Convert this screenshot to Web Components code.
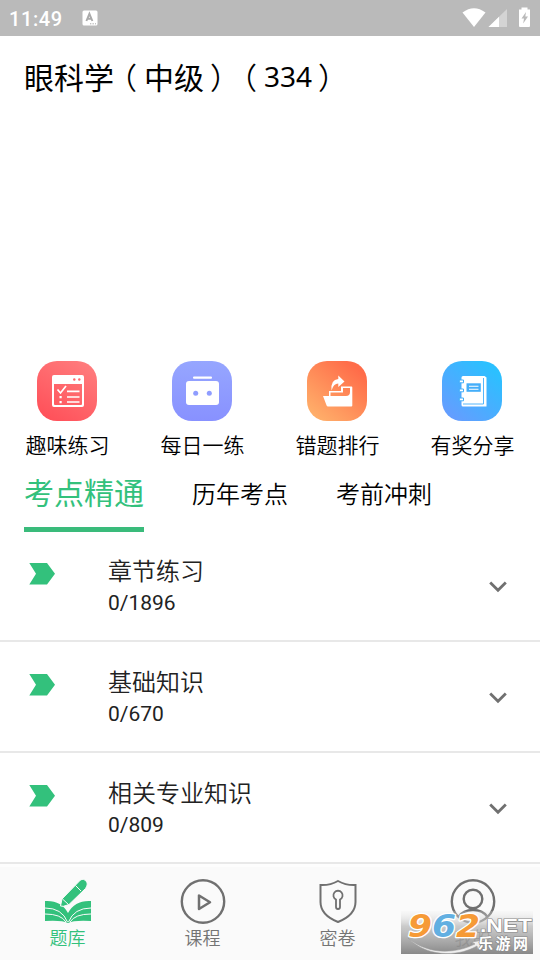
<!DOCTYPE html>
<html lang="zh-CN">
<head>
<meta charset="utf-8">
<title>题库</title>
<style>
html,body{margin:0;padding:0}
body{width:540px;height:960px;overflow:hidden;background:#fff;font-family:"Noto Sans CJK SC",sans-serif;font-weight:350;color:#000}
</style>
</head>
<body>
<quiz-app></quiz-app>
<script>
const define = (name, html) => {
  const t = document.createElement('template');
  t.innerHTML = html;
  customElements.define(name, class extends HTMLElement {
    constructor() {
      super();
      this.attachShadow({mode: 'open'}).appendChild(t.content.cloneNode(true));
    }
  });
};

define('status-bar', `<style>
:host{display:flex;box-sizing:border-box;height:36px;background:#bababa;color:#fff;align-items:center;padding:0 8px 0 9px;font:500 20px/36px Roboto,sans-serif}
.time{width:73px;letter-spacing:.6px;padding-top:1px}.fill{flex:1}svg{display:block}
</style><span class="time">11:49</span>
<svg width="16" height="16" viewBox="0 0 16 16"><rect x=".5" y=".5" width="15" height="15" rx="1.500" fill="#fff"/><path d="M4.400 11 7.400 3.800 10.400 11M5.400 8.700h4" fill="none" stroke="#aaa" stroke-width="1.900"/><path d="M8 13.800h1.300m1.200 0h1.300m1.200 0h1" stroke="#aaa"/></svg>
<span class="fill"></span>
<svg width="77" height="24" viewBox="455 6 77 24"><path d="M462.500 12.500Q474 4 485.500 12.500L474 27Z" fill="#fff"/><path d="M488.500 27 507 9v18Z" fill="#d4d4d4"/><path d="M488.500 27 499 16.800V27Z" fill="#fff"/><path d="M519 9.500h2.500V7.500h6v2H530V26q0 1-1 1h-9q-1 0-1-1Z" fill="#fff"/><path d="m526 12-4.500 6.500h2.500l-.8 5 4.800-7h-2.700Z" fill="#bababa"/></svg>`);

define('page-title', `<style>
:host{display:flex;height:325px;box-sizing:border-box;padding:18px 24px 0;font-size:30px;line-height:44px;white-space:pre;font-weight:400}
.p{width:30px;text-spacing-trim:space-all;font-weight:350}
.open{margin:0 7px 0 -7px}.close{margin:0 -6px 0 6px}
.n{font-family:"Noto Sans",sans-serif;font-size:28px;width:48px}
</style><span>眼科学</span><span class="p open">（</span><span>中级</span><span class="p close">）</span><span class="p open">（</span><span class="n">334</span><span class="p close">）</span>`);

define('quick-entry', `<style>
:host{display:flex;flex:1;flex-direction:column;align-items:center;font-size:21px;line-height:30px;white-space:nowrap}
::slotted(svg){display:block;width:60px;height:60px;margin-right:1px}
.label{margin-top:8px}
</style><slot name="icon"></slot><span class="label"><slot></slot></span>`);

define('tab-item', `<style>
:host{display:block;box-sizing:border-box;width:96px;height:71px;font-size:24px;line-height:46px;padding-top:9px;white-space:nowrap}
:host([active]){width:120px;font-size:30px;color:#33c17c;border-bottom:5px solid #3abb7b;line-height:44px;padding-top:8px;font-weight:400}
</style><slot></slot>`);

define('chapter-row', `<style>
:host{display:flex;box-sizing:border-box;height:111px;border-bottom:2px solid #e8e8e8;padding:0 29px;color:#222}
.mark{width:79px;padding-top:31px}.text{flex:1}
.name{font-size:24px;line-height:36px;padding-top:21px}
.count{font-size:21px;line-height:30px;font-weight:400;font-family:Roboto,sans-serif}
.arrow{padding:49px 3px 0 0}svg{display:block}
</style><span class="mark"><svg width="27" height="23" viewBox="0 0 27 23"><path d="M.3 1H18l8 10.700L18 22.500H.3L7 11.700Z" fill="#33c17c"/></svg></span>
<div class="text"><div class="name"><slot></slot></div><div class="count"><slot name="count"></slot></div></div>
<span class="arrow"><svg width="20" height="14" viewBox="0 0 20 14"><path d="m2.200 2.500 7.800 7.800 7.800-7.800" fill="none" stroke="#707070" stroke-width="2.800"/></svg></span>`);

define('nav-item', `<style>
:host{display:flex;flex:1;flex-direction:column;align-items:center;font-size:18px;line-height:24px;color:#747474}
:host([active]){color:#33c17c}
::slotted(svg){display:block;width:46px;height:46px}
</style><slot name="icon"></slot><span><slot></slot></span>`);

define('site-mark', `<style>
:host{display:block;position:absolute;left:401px;top:911px;width:132px;height:43px}
svg{display:block;overflow:visible}
</style><svg width="132" height="43" viewBox="0 0 132 43">
<defs><linearGradient id="fade" x1="0" y1="0" x2="0" y2="1"><stop stop-color="#eee" stop-opacity=".2"/><stop offset=".35" stop-color="#bbb" stop-opacity=".75"/><stop offset="1" stop-color="#828282" stop-opacity=".95"/></linearGradient></defs>
<rect width="132" height="43" fill="url(#fade)"/>
<path d="M7 27C27 44 54 43 74 33l-3-2 12-2-6 10-1-4C55 47 24 45 7 27Z" fill="#eee" stroke="#999" stroke-width=".5"/>
<text x="7" y="26" font-family="DejaVu Sans,sans-serif" font-weight="700" font-style="italic" font-size="32" stroke="#fff" stroke-width="2.600" paint-order="stroke" stroke-linejoin="round" textLength="72" lengthAdjust="spacingAndGlyphs"><tspan fill="#f69a36">9</tspan><tspan fill="#62afe1">6</tspan><tspan fill="#f69a36">2</tspan></text>
<g fill="#fff" stroke="#888" stroke-width="1.200" paint-order="stroke" font-weight="700"><text x="79" y="21" font-family="Liberation Sans,sans-serif" font-size="18" textLength="52" lengthAdjust="spacingAndGlyphs">.NET</text><text x="77" y="38" font-family="Noto Sans CJK SC,sans-serif" font-size="15" textLength="50">乐游网</text></g></svg>`);

define('quiz-app', `<style>
:host{display:flex;flex-direction:column;width:540px;height:960px;position:relative;overflow:hidden}
.entries{display:flex;height:100px}
.tabs{display:flex;height:71px;margin-bottom:-1px;padding:0 24px;gap:48px}
.rows{height:333px;flex:none}
nav{display:flex;flex:1;box-sizing:border-box;background:#fafafa;border-top:3px solid #fdfdfd;padding-top:12px}
</style>
<status-bar></status-bar>
<page-title></page-title>
<div class="entries">
<quick-entry><svg slot="icon" viewBox="0 0 60 60"><defs><linearGradient id="r" x1=".8" y1="0" x2=".2" y2="1"><stop stop-color="#ff7c7d"/><stop offset="1" stop-color="#ff5059"/></linearGradient></defs><rect width="60" height="60" rx="20" fill="url(#r)"/><path fill="#fff" fill-rule="evenodd" d="M17 14H45q2 0 2 2V44q0 2-2 2H17q-2 0-2-2V16q0-2 2-2ZM17 23V43q0 1 1 1H44q1 0 1-1V23Z"/><g fill="#ff666b"><circle cx="37.300" cy="18.500" r="1.200"/><circle cx="42.300" cy="18.500" r="1.200"/></g><path d="m20.500 28.500 3 3.500 5.500-7M30 30.300H42.500M30 36H42.500M30 41H42.500" fill="none" stroke="#fff" stroke-width="1.700"/><path fill="#fff" d="M22.500 35h2.200v2.200h-2.200zM22.500 40h2.200v2.200h-2.200z"/></svg>趣味练习</quick-entry>
<quick-entry><svg slot="icon" viewBox="0 0 60 60"><defs><linearGradient id="v" x1="0" y1="0" x2="0" y2="1"><stop stop-color="#96a6ff"/><stop offset="1" stop-color="#8891ff"/></linearGradient></defs><rect width="60" height="60" rx="20" fill="url(#v)"/><rect x="21" y="15.500" width="19" height="2.300" rx="1" fill="#fff"/><rect x="14" y="20" width="33" height="24" rx="3" fill="#fff"/><g fill="#8f9dff"><circle cx="23.700" cy="32.200" r="2.500"/><circle cx="37.300" cy="32.200" r="2.500"/></g></svg>每日一练</quick-entry>
<quick-entry><svg slot="icon" viewBox="0 0 60 60"><defs><linearGradient id="o" x1=".8" y1=".1" x2=".1" y2=".95"><stop stop-color="#ff6c49"/><stop offset="1" stop-color="#ffb16b"/></linearGradient></defs><rect width="60" height="60" rx="20" fill="url(#o)"/><path d="M24.500 29.500Q23.500 18.500 31.300 18v-3.500l6.200 6-6.200 5.500v-3.500Q26.500 22.500 24.500 29.500Z" fill="#fff"/><path d="M22 30H34V25.500H44.500q.8 0 .8.800V44.500q0 1-1 1H21q-1 0-1.400-1L16 35h6V30Zm1.500 1.500V35H39q4 0 4-4V27H36v4.500Z" fill="#fff" fill-rule="evenodd"/></svg>错题排行</quick-entry>
<quick-entry><svg slot="icon" viewBox="0 0 60 60"><defs><linearGradient id="b" x1=".8" y1=".1" x2=".15" y2=".9"><stop stop-color="#2bc0ff"/><stop offset="1" stop-color="#639eff"/></linearGradient></defs><rect width="60" height="60" rx="20" fill="url(#b)"/><path d="M21 15H42.500l2 1.500V45.500H21q-1.500 0-1.500-1.500V16.500Q19.500 15 21 15Z" fill="#fff"/><path d="M41.500 17V43H21" fill="none" stroke="#44aef9" stroke-width=".9"/><path d="M24.500 22.300h14.300v8.500H24.500Z" fill="#44aef9"/><path d="M27 25.300h9.500M27 28.300h9.500" stroke="#fff" stroke-width="1.100"/><g fill="#fff" stroke="#44aef9" stroke-width="1"><path d="M17.300 19h4.200v2.800h-4.200zM17.300 28h4.200v2.800h-4.200zM17.300 37h4.200v2.800h-4.200z"/></g></svg>有奖分享</quick-entry>
</div>
<div class="tabs"><tab-item active>考点精通</tab-item><tab-item>历年考点</tab-item><tab-item>考前冲刺</tab-item></div>
<div class="rows">
<chapter-row>章节练习<span slot="count">0/1896</span></chapter-row>
<chapter-row>基础知识<span slot="count">0/670</span></chapter-row>
<chapter-row>相关专业知识<span slot="count">0/809</span></chapter-row>
</div>
<nav>
<nav-item active><svg slot="icon" viewBox="0 0 46 46"><g fill="#33c17c"><path d="M0 22q16-1 23 12Q30 21 46 22V42q-17-1-23 2Q17 41 0 42Z"/><path d="m15.500 27 1.500-7L33.500 3Q37-1.500 40.500 1.500t0 8L24 25.500l-5.500 1.800Z" stroke="#fafafa" stroke-width="1"/></g><path d="M0 29q17 0 22.500 14M0 35q16 0 21 8M46 29Q29 29 23.500 43M46 35q-16 0-21 8M30.500 6.500l5.500 5.500M17.500 20l6 5.500" fill="none" stroke="#fafafa" stroke-width="1"/></svg>题库</nav-item>
<nav-item><svg slot="icon" viewBox="0 0 46 46"><g fill="none" stroke="#707070"><circle cx="23" cy="22.500" r="21.200" stroke-width="2.400"/><path d="M19 16.500V30L30 23.300Z" stroke-width="2.500" stroke-linejoin="round"/></g></svg>课程</nav-item>
<nav-item><svg slot="icon" viewBox="0 0 46 46"><g fill="none" stroke="#707070" stroke-width="2"><path d="M23 2Q31 6.500 40.500 6V23Q40.500 36 23 43 5.500 36 5.500 23V6Q15 6.500 23 2Z"/><path d="M21 20.500A4.600 4.600 0 1 1 25 20.500V28q0 2-2 2t-2-2Z" stroke-width="1.800"/></g></svg>密卷</nav-item>
<nav-item><svg slot="icon" viewBox="0 0 46 46"><g fill="none" stroke="#707070" stroke-width="2.400"><circle cx="23" cy="22.500" r="21.200"/><circle cx="23" cy="20" r="9.300"/><path d="M8.500 38Q13 31 23 31t14.500 7"/></g></svg>我的</nav-item>
</nav>
<site-mark></site-mark>`);
</script>
</body>
</html>
